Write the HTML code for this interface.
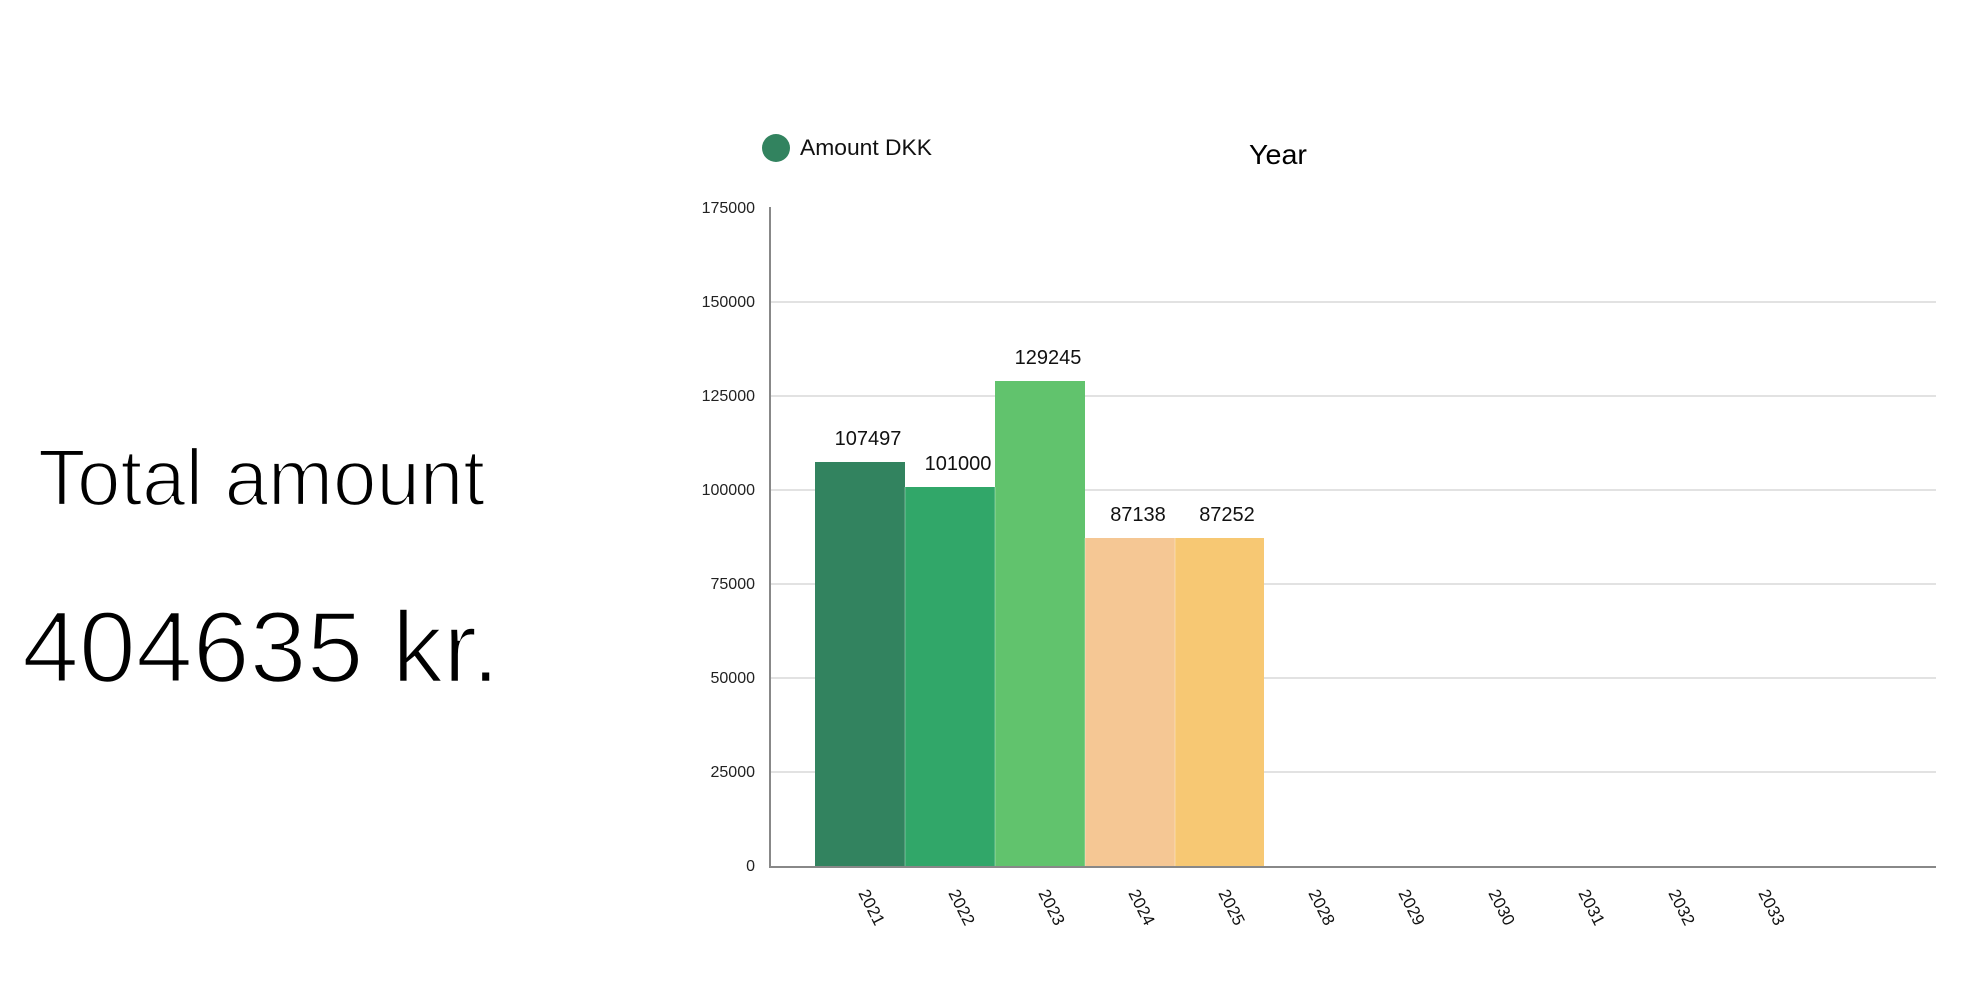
<!DOCTYPE html>
<html><head><meta charset="utf-8"><style>
html,body{margin:0;padding:0;background:#fff;width:1971px;height:985px;overflow:hidden}
svg{display:block}
text{font-family:"Liberation Sans",sans-serif}
</style></head><body>
<svg width="1971" height="985" viewBox="0 0 1971 985" xmlns="http://www.w3.org/2000/svg">
<text x="38" y="505" font-size="80" fill="#000" textLength="447" lengthAdjust="spacingAndGlyphs" stroke="#fff" stroke-width="2.2">Total amount</text>
<text x="22" y="682" font-size="101" fill="#000" textLength="478" lengthAdjust="spacingAndGlyphs" stroke="#fff" stroke-width="2.6">404635 kr.</text>

<circle cx="776" cy="148" r="14" fill="#32835f"/>
<text x="800" y="155" font-size="22" fill="#111" textLength="132" lengthAdjust="spacingAndGlyphs">Amount DKK</text>
<text x="1249" y="164" font-size="28" fill="#000" textLength="58" lengthAdjust="spacingAndGlyphs">Year</text>

<g stroke="#e2e2e2" stroke-width="2">
<line x1="771" y1="302" x2="1936" y2="302"/>
<line x1="771" y1="396" x2="1936" y2="396"/>
<line x1="771" y1="490" x2="1936" y2="490"/>
<line x1="771" y1="584" x2="1936" y2="584"/>
<line x1="771" y1="678" x2="1936" y2="678"/>
<line x1="771" y1="772" x2="1936" y2="772"/>
</g>
<g font-size="16" fill="#222" text-anchor="end">
<text x="755" y="213">175000</text>
<text x="755" y="307">150000</text>
<text x="755" y="401">125000</text>
<text x="755" y="495">100000</text>
<text x="755" y="589">75000</text>
<text x="755" y="683">50000</text>
<text x="755" y="777">25000</text>
<text x="755" y="871">0</text>
</g>

<rect x="815" y="462" width="90" height="404" fill="#32835f"/>
<rect x="905" y="487" width="90" height="379" fill="#31a769"/>
<rect x="995" y="381" width="90" height="485" fill="#61c36d"/>
<rect x="1085" y="538" width="90" height="328" fill="#f5c794"/>
<rect x="1175" y="538" width="89" height="328" fill="#f7c873"/>
<g stroke="#fff" stroke-opacity="0.35" stroke-width="1">
<line x1="905" y1="487" x2="905" y2="866"/>
<line x1="995" y1="487" x2="995" y2="866"/>
<line x1="1085" y1="538" x2="1085" y2="866"/>
<line x1="1175" y1="538" x2="1175" y2="866"/>
</g>

<g font-size="20" fill="#111" text-anchor="middle">
<text x="868" y="445">107497</text>
<text x="958" y="470">101000</text>
<text x="1048" y="364">129245</text>
<text x="1138" y="521">87138</text>
<text x="1227" y="521">87252</text>
</g>

<line x1="770" y1="207" x2="770" y2="867" stroke="#888" stroke-width="2"/>
<line x1="769" y1="867" x2="1936" y2="867" stroke="#888" stroke-width="2"/>

<g font-size="17" fill="#111">
<text transform="translate(858,893) rotate(63)">2021</text>
<text transform="translate(948,893) rotate(63)">2022</text>
<text transform="translate(1038,893) rotate(63)">2023</text>
<text transform="translate(1128,893) rotate(63)">2024</text>
<text transform="translate(1218,893) rotate(63)">2025</text>
<text transform="translate(1308,893) rotate(63)">2028</text>
<text transform="translate(1398,893) rotate(63)">2029</text>
<text transform="translate(1488,893) rotate(63)">2030</text>
<text transform="translate(1578,893) rotate(63)">2031</text>
<text transform="translate(1668,893) rotate(63)">2032</text>
<text transform="translate(1758,893) rotate(63)">2033</text>
</g>
</svg>
</body></html>
